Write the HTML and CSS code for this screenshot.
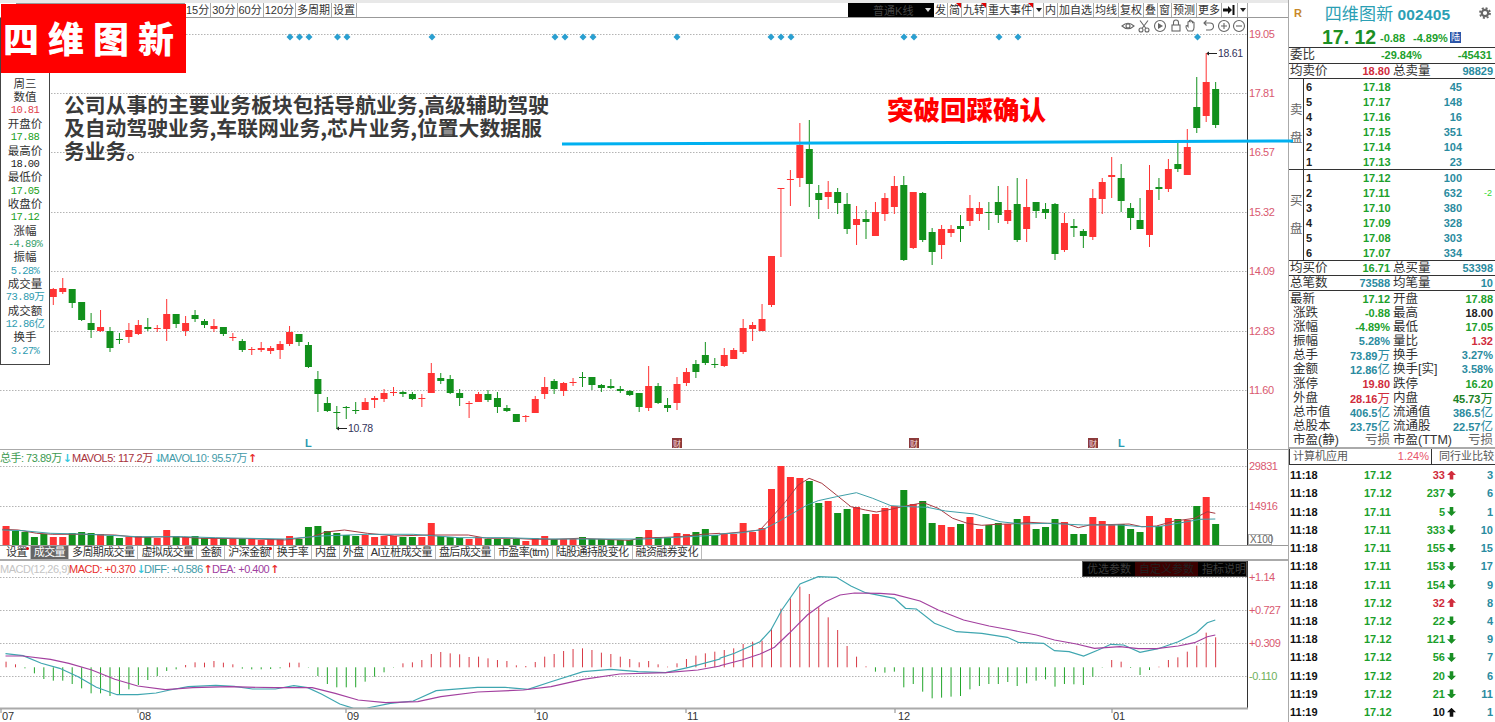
FILE: index.html
```html
<!DOCTYPE html>
<html lang="zh-CN">
<head>
<meta charset="UTF-8">
<title>四维图新 002405</title>
<link rel="stylesheet" href="styles.css">
</head>
<body>
<div class="screen">

  <div class="main">
    <!-- top toolbar -->
    <div class="toolbar">
      <div class="tb-hidden"></div>
      <div class="tb-group">
        <span class="tb-btn">15分</span><span class="tb-btn">30分</span><span class="tb-btn">60分</span><span class="tb-btn">120分</span><span class="tb-btn">多周期</span><span class="tb-btn">设置</span>
      </div>
      <div class="tb-select"><span>普通K线</span><i class="caret white"></i></div>
      <div class="tb-group">
        <span class="tb-btn">发</span><span class="tb-btn flag">简</span><span class="tb-btn flag">九转</span><span class="tb-btn flag">重大事件</span><span class="tb-btn small"><i class="caret"></i></span><span class="tb-btn">内</span><span class="tb-btn">加自选</span><span class="tb-btn">均线</span><span class="tb-btn">复权</span><span class="tb-btn">叠</span><span class="tb-btn">窗</span><span class="tb-btn">预测</span><span class="tb-btn">更多</span>
        <span class="tb-btn">
          <svg width="13" height="10" viewBox="0 0 13 10"><path d="M0 3.5h5V1l4 4-4 4V6.500H0z" fill="#111"/><path d="M10.500 0v10" stroke="#111" stroke-width="2"/></svg>
        </span>
        <span class="tb-btn small"><i class="caret"></i></span>
      </div>
    </div>

    <!-- price chart -->
    <div class="panel price-panel">
      <svg id="priceChart" class="chart" width="1288" height="431" viewBox="0 18 1288 431">
        <g class="grid">
          <path d="M0 34.500H1247M0 93.500H1247M0 152.500H1247M0 212.500H1247M0 271.500H1247M0 331.500H1247M0 390.500H1247"/>
        </g>
        <path class="axis" d="M1247.500 18V449"/>
        <g class="tick-red">
          <text x="1249" y="38">19.05</text>
          <text x="1249" y="97">17.81</text>
          <text x="1249" y="156">16.57</text>
          <text x="1249" y="216">15.32</text>
          <text x="1249" y="275">14.09</text>
          <text x="1249" y="335">12.83</text>
          <text x="1249" y="394">11.60</text>
        </g>

        <!-- chart tools -->
        <g class="tool">
          <path d="M1122 26q6-5.500 12 0q-6 5.500-12 0z"/><circle cx="1128" cy="26" r="2"/>
          <circle cx="1141" cy="30" r="2"/><circle cx="1147" cy="30" r="2"/><path d="M1142 28.500l6-8M1146 28.500l-6-8"/>
          <circle cx="1160" cy="26" r="5.500"/><path class="tool-fill" d="M1158 23l5 3-5 3z"/>
          <rect x="1172" y="25" width="8" height="6"/><path d="M1173.500 25v-2.500a2.500 2.500 0 0 1 5 0V25"/>
          <path d="M1188 31q-2.500-3-2-5 1-1 2 .5v-4.500q1-1 1.500 0v-1.500q1-1 1.500 0v1q1-1 1.500 0v1q1-1 1.500 0v5q0 2.500-1.500 3.500z"/>
          <path d="M1204 23h6a3.500 3.500 0 0 1 0 7h-4M1206.500 20.500l-2.500 2.500 2.500 2.500"/>
          <circle cx="1224" cy="26" r="5.500"/><path d="M1221 26h6M1224 23v6"/>
          <circle cx="1239" cy="26" r="5.500"/><path d="M1236 26h6"/>
        </g>

        <!-- highest / lowest price marks -->
        <g class="mark">
          <path d="M1207 53.500h10"/><path class="mark-head" d="M1206 53.500l3-2v4z"/>
          <text x="1218" y="57">18.61</text>
          <path d="M337 428.500h10"/><path class="mark-head" d="M336 428.500l3-2v4z"/>
          <text x="348" y="432">10.78</text>
        </g>

        <!-- event marks along the bottom -->
        <text class="ev-l" x="305" y="447">L</text>
        <text class="ev-l" x="1118" y="447">L</text>
        <rect class="ev-box" x="672" y="438" width="10" height="10"/><text class="ev-txt" x="673" y="446.500">财</text>
        <rect class="ev-box" x="909" y="438" width="10" height="10"/><text class="ev-txt" x="910" y="446.500">财</text>
        <rect class="ev-box" x="1088" y="438" width="10" height="10"/><text class="ev-txt" x="1089" y="446.500">财</text>

        <g id="candles"></g>
        <g id="dots"></g>
        <path class="trend" d="M562 144L1293 141"/>
      </svg>

      <div class="tip">
        <div>周三</div><div>数值</div><div class="num red">10.81</div>
        <div>开盘价</div><div class="num green">17.88</div>
        <div>最高价</div><div class="num black">18.00</div>
        <div>最低价</div><div class="num green">17.05</div>
        <div>收盘价</div><div class="num green">17.12</div>
        <div>涨幅</div><div class="num seagreen">-4.89%</div>
        <div>振幅</div><div class="num teal">5.28%</div>
        <div>成交量</div><div class="num teal">73.89万</div>
        <div>成交额</div><div class="num teal">12.86亿</div>
        <div>换手</div><div class="num teal">3.27%</div>
      </div>

      <div class="logo">四维图新</div>
      <div class="note">公司从事的主要业务板块包括导航业务,高级辅助驾驶<br>及自动驾驶业务,车联网业务,芯片业务,位置大数据服<br>务业务。</div>
      <div class="breakout">突破回踩确认</div>
    </div>

    <!-- volume -->
    <div class="panel vol-panel">
      <svg id="volChart" class="chart" width="1288" height="95" viewBox="0 450 1288 95">
        <g class="grid"><path d="M0 466.500H1247M0 506.500H1247"/></g>
        <path class="axis" d="M1247.500 450V545"/>
        <g class="tick-red">
          <text x="1249" y="470">29831</text>
          <text x="1249" y="510">14916</text>
        </g>
        <g id="volBars"></g>
        <text class="legend" y="462">
          <tspan class="l-green" x="0">总手: 73.89万</tspan><tspan class="l-cyan arrow" dx="1">↓</tspan>
          <tspan class="l-maroon" x="72">MAVOL5: 117.2万</tspan><tspan class="l-cyan arrow" dx="1">↓</tspan>
          <tspan class="l-teal" x="160">MAVOL10: 95.57万</tspan><tspan class="l-red arrow" dx="1">↑</tspan>
        </text>
        <rect class="x100" x="1248.500" y="534.500" width="23" height="10"/>
        <text class="x100-txt" x="1250" y="543">X100</text>
      </svg>
    </div>

    <!-- indicator tabs -->
    <div class="tabs">
      <span class="tab star">设置</span><span class="tab on">成交量</span><span class="tab">多周期成交量</span><span class="tab">虚拟成交量</span><span class="tab">金额</span><span class="tab star">沪深金额</span><span class="tab">换手率</span><span class="tab">内盘</span><span class="tab">外盘</span><span class="tab">AI立桩成交量</span><span class="tab">盘后成交量</span><span class="tab">市盈率(ttm)</span><span class="tab">陆股通持股变化</span><span class="tab">融资融券变化</span>
    </div>

    <!-- macd -->
    <div class="panel macd-panel">
      <svg id="macdChart" class="chart" width="1288" height="147" viewBox="0 561 1288 147">
        <g class="grid"><path d="M0 577.500H1247M0 610.500H1247M0 643.500H1247M0 676.500H1247"/></g>
        <path class="axis" d="M1247.500 561V708"/>
        <g class="tick-red">
          <text x="1249" y="581">+1.14</text>
          <text x="1249" y="614">+0.727</text>
          <text x="1249" y="647">+0.309</text>
          <text class="tick-green" x="1249" y="680">-0.110</text>
        </g>
        <g id="macdBars"></g>
        <text class="legend" y="573">
          <tspan class="l-gray" x="0">MACD(12,26,9)</tspan>
          <tspan class="l-red" x="69">MACD: +0.370</tspan><tspan class="l-cyan arrow" dx="1">↓</tspan>
          <tspan class="l-teal" x="144">DIFF: +0.586</tspan><tspan class="l-red arrow" dx="1">↑</tspan>
          <tspan class="l-purple" x="212">DEA: +0.400</tspan><tspan class="l-red arrow" dx="1">↑</tspan>
        </text>
      </svg>
      <div class="params">
        <span class="param">优选参数</span><span class="param cur">自定义参数</span><span class="param">指标说明</span>
      </div>
    </div>

    <!-- date axis -->
    <div class="dates">
      <svg class="chart" width="1288" height="13" viewBox="0 709 1288 13">
        <path class="date-line" d="M0 708.500H1248"/>
        <path class="date-tick" d="M1 709v4M138 709v4M346 709v4M535 709v4M686 709v4M895 709v4M1112 709v4"/>
        <text class="date" x="2" y="720">07</text>
        <text class="date" x="139" y="720">08</text>
        <text class="date" x="347" y="720">09</text>
        <text class="date" x="536" y="720">10</text>
        <text class="date" x="687" y="720">11</text>
        <text class="date" x="898" y="720">12</text>
        <text class="date" x="1113" y="720">01</text>
      </svg>
    </div>
  </div>

  <!-- quote column -->
  <aside class="side">
    <div class="head">
      <div class="head-name">
        <span class="r-mark">R</span>
        <span class="stock">四维图新 <b>002405</b></span>
        <svg class="gear" width="12" height="12" viewBox="0 0 12 12"><circle cx="6" cy="6" r="3.200" fill="none" stroke="#666" stroke-width="2.200"/><circle cx="6" cy="6" r="5" fill="none" stroke="#666" stroke-width="1.800" stroke-dasharray="2 1.930"/></svg>
      </div>
      <div class="head-price">
        <span class="big">17. 12</span>
        <span class="chg">-0.88</span>
        <span class="chg pct">-4.89%</span>
        <span class="lu">陆</span>
      </div>
    </div>

    <div class="line wei"><span>委比</span><span class="v green center">-29.84%</span><span class="v green">-45431</span></div>
    <div class="line">
      <div class="half"><span>均卖价</span><span class="v red">18.80</span></div>
      <div class="half"><span>总卖量</span><span class="v teal">98829</span></div>
    </div>

    <div class="book">
      <div class="book-side"><span>卖</span><span>盘</span></div>
      <div class="book-rows">
        <div class="book-row"><b>6</b><span class="v green">17.18</span><span class="v teal">45</span></div>
        <div class="book-row"><b>5</b><span class="v green">17.17</span><span class="v teal">148</span></div>
        <div class="book-row"><b>4</b><span class="v green">17.16</span><span class="v teal">16</span></div>
        <div class="book-row"><b>3</b><span class="v green">17.15</span><span class="v teal">351</span></div>
        <div class="book-row"><b>2</b><span class="v green">17.14</span><span class="v teal">104</span></div>
        <div class="book-row"><b>1</b><span class="v green">17.13</span><span class="v teal">23</span></div>
      </div>
    </div>
    <div class="book">
      <div class="book-side"><span>买</span><span>盘</span></div>
      <div class="book-rows">
        <div class="book-row"><b>1</b><span class="v green">17.12</span><span class="v teal">100</span></div>
        <div class="book-row"><b>2</b><span class="v green">17.11</span><span class="v teal">632</span><span class="tiny">-2</span></div>
        <div class="book-row"><b>3</b><span class="v green">17.10</span><span class="v teal">380</span></div>
        <div class="book-row"><b>4</b><span class="v green">17.09</span><span class="v teal">328</span></div>
        <div class="book-row"><b>5</b><span class="v green">17.08</span><span class="v teal">303</span></div>
        <div class="book-row"><b>6</b><span class="v green">17.07</span><span class="v teal">334</span></div>
      </div>
    </div>

    <div class="line">
      <div class="half"><span>均买价</span><span class="v green">16.71</span></div>
      <div class="half"><span>总买量</span><span class="v teal">53398</span></div>
    </div>
    <div class="line">
      <div class="half"><span>总笔数</span><span class="v teal">73588</span></div>
      <div class="half"><span>均笔量</span><span class="v teal">10</span></div>
    </div>

    <div class="stats">
      <div class="half"><span>最新</span><span class="v green">17.12</span></div><div class="half"><span>开盘</span><span class="v green">17.88</span></div>
      <div class="half"><span>涨跌</span><span class="v green">-0.88</span></div><div class="half"><span>最高</span><span class="v black">18.00</span></div>
      <div class="half"><span>涨幅</span><span class="v green">-4.89%</span></div><div class="half"><span>最低</span><span class="v green">17.05</span></div>
      <div class="half"><span>振幅</span><span class="v teal">5.28%</span></div><div class="half"><span>量比</span><span class="v red">1.32</span></div>
      <div class="half"><span>总手</span><span class="v teal">73.89<em>万</em></span></div><div class="half"><span>换手</span><span class="v teal">3.27%</span></div>
      <div class="half"><span>金额</span><span class="v teal">12.86<em>亿</em></span></div><div class="half"><span>换手[实]</span><span class="v teal">3.58%</span></div>
      <div class="half"><span>涨停</span><span class="v red">19.80</span></div><div class="half"><span>跌停</span><span class="v green">16.20</span></div>
      <div class="half"><span>外盘</span><span class="v red">28.16<em>万</em></span></div><div class="half"><span>内盘</span><span class="v darkgreen">45.73<em>万</em></span></div>
      <div class="half"><span>总市值</span><span class="v teal">406.5<em>亿</em></span></div><div class="half"><span>流通值</span><span class="v teal">386.5<em>亿</em></span></div>
      <div class="half"><span>总股本</span><span class="v teal">23.75<em>亿</em></span></div><div class="half"><span>流通股</span><span class="v teal">22.57<em>亿</em></span></div>
      <div class="half"><span>市盈(静)</span><span class="loss">亏损</span></div><div class="half"><span>市盈(TTM)</span><span class="loss">亏损</span></div>
    </div>

    <div class="sector">
      <div class="sector-l"><span>计算机应用</span><span class="sector-pct">1.24%</span></div>
      <div class="sector-r">同行业比较</div>
    </div>

    <div class="ticks">
      <div class="tick"><b>11:18</b><span class="p">17.12</span><span class="q red">33</span><i class="arr up red-bg"></i><span class="n">3</span></div>
      <div class="tick"><b>11:18</b><span class="p">17.12</span><span class="q">237</span><i class="arr dn"></i><span class="n">6</span></div>
      <div class="tick"><b>11:18</b><span class="p">17.11</span><span class="q">5</span><i class="arr dn"></i><span class="n">1</span></div>
      <div class="tick"><b>11:18</b><span class="p">17.11</span><span class="q">333</span><i class="arr dn"></i><span class="n">10</span></div>
      <div class="tick"><b>11:18</b><span class="p">17.11</span><span class="q">155</span><i class="arr dn"></i><span class="n">15</span></div>
      <div class="tick"><b>11:18</b><span class="p">17.11</span><span class="q">153</span><i class="arr dn"></i><span class="n">17</span></div>
      <div class="tick"><b>11:18</b><span class="p">17.11</span><span class="q">154</span><i class="arr dn"></i><span class="n">9</span></div>
      <div class="tick"><b>11:18</b><span class="p">17.12</span><span class="q red">32</span><i class="arr up red-bg"></i><span class="n">8</span></div>
      <div class="tick"><b>11:18</b><span class="p">17.12</span><span class="q">22</span><i class="arr dn"></i><span class="n">4</span></div>
      <div class="tick"><b>11:18</b><span class="p">17.12</span><span class="q">121</span><i class="arr dn"></i><span class="n">9</span></div>
      <div class="tick"><b>11:18</b><span class="p">17.12</span><span class="q">56</span><i class="arr dn"></i><span class="n">7</span></div>
      <div class="tick"><b>11:19</b><span class="p">17.12</span><span class="q">20</span><i class="arr dn"></i><span class="n">6</span></div>
      <div class="tick"><b>11:19</b><span class="p">17.12</span><span class="q">21</span><i class="arr dn"></i><span class="n">11</span></div>
      <div class="tick"><b>11:19</b><span class="p">17.12</span><span class="q black">10</span><i class="arr up black-bg"></i><span class="n">1</span></div>
    </div>
  </aside>
</div>
<script src="chart.js"></script>
</body>
</html>
```

FILE: styles.css
```css
* {
	box-sizing: border-box;
}
html, body {
	margin: 0;
	padding: 0;
	background: #fff;
	overflow: hidden;
}
body {
	font-family: "Liberation Sans", "Noto Sans CJK SC", sans-serif;
	font-size: 11px;
	color: #222;
}
.screen {
	display: flex;
	width: 1495px;
	height: 722px;
}
.main {
	width: 1288px;
	flex: none;
}

/* toolbar */
.toolbar {
	display: flex;
	height: 18px;
	border-top: 3px solid #e8e8e8;
	border-bottom: 1px solid #999;
}
.tb-hidden {
	width: 169px;
	margin-left: 16px;
	border-top: 1px solid #999;
}
.tb-group {
	display: flex;
}
.tb-btn {
	position: relative;
	display: flex;
	align-items: center;
	justify-content: center;
	padding: 0 1px;
	border-right: 1px solid #aaa;
	font-size: 11px;
	line-height: 14px;
	color: #333;
	white-space: nowrap;
}
.tb-btn.small {
	width: 10px;
}
.tb-btn.flag::after {
	content: "";
	position: absolute;
	top: 0;
	right: 0;
	border-top: 5px solid #e00000;
	border-left: 5px solid transparent;
}
.tb-select {
	display: flex;
	align-items: center;
	justify-content: space-between;
	width: 86px;
	margin-left: 491px;
	padding: 0 3px 0 25px;
	background: #000;
	color: #444;
	font-size: 11px;
}
.caret {
	display: block;
	border-top: 4px solid #222;
	border-left: 3.500px solid transparent;
	border-right: 3.500px solid transparent;
}
.caret.white {
	border-top-color: #ddd;
}

/* chart panels */
.panel {
	position: relative;
}
.chart {
	display: block;
	position: relative;
	z-index: 1;
	overflow: visible;
}
.price-panel {
	height: 432px;
	border-bottom: 1px solid #aaa;
}
.vol-panel {
	height: 96px;
	border-bottom: 1px solid #999;
}
.macd-panel {
	height: 147px;
}
.grid path {
	fill: none;
	stroke: #b4b4b4;
	stroke-width: 1;
	stroke-dasharray: 1.500 1.500;
}
.axis {
	stroke: #333;
	stroke-width: 1;
	fill: none;
}
.tick-red text {
	font-size: 11px;
	fill: #d9596f;
	letter-spacing: -0.4px;
}
.tick-red .tick-green {
	fill: #6fb05a;
}
.tool path, .tool circle, .tool rect {
	fill: none;
	stroke: #666;
	stroke-width: 1.100;
}
.tool .tool-fill {
	fill: #666;
	stroke: none;
}
.mark path {
	stroke: #222;
	stroke-width: 1;
	fill: none;
}
.mark .mark-head {
	fill: #222;
	stroke: none;
}
.mark text {
	font-size: 10.500px;
	letter-spacing: -0.300px;
	fill: #33335a;
}
.ev-l {
	font-size: 11px;
	font-weight: bold;
	fill: #2a9ab0;
}
.ev-box {
	fill: #8c3a3a;
}
.ev-txt {
	font-size: 8px;
	fill: #f3dede;
}
.trend {
	stroke: #00b0f0;
	stroke-width: 3;
	fill: none;
}
.legend {
	font-size: 11px;
	letter-spacing: -0.500px;
}
.arrow {
	font-family: "DejaVu Sans", sans-serif;
	font-weight: bold;
	font-size: 11px;
	letter-spacing: -2px;
}
.l-green { fill: #3c9a50; }
.l-cyan { fill: #35c8e0; }
.l-maroon { fill: #a8323c; }
.l-teal { fill: #3f9aa8; }
.l-red { fill: #e8302e; }
.l-gray { fill: #c4c4c4; }
.l-purple { fill: #a040a0; }
.x100 {
	fill: #fff;
	stroke: #aaa;
}
.x100-txt {
	font-size: 10px;
	fill: #666;
}

/* floating data panel on the chart */
.tip {
	position: absolute;
	top: 0;
	left: 0;
	z-index: 2;
	display: flex;
	flex-direction: column;
	justify-content: flex-end;
	width: 50px;
	height: 347px;
	padding-bottom: 6px;
	background: #fff;
	border-left: 1px solid #444;
	border-right: 1px solid #444;
	border-bottom: 1px solid #444;
	text-align: center;
	font-size: 11.500px;
}
.tip div {
	height: 13.350px;
	line-height: 13.350px;
	color: #333;
	white-space: nowrap;
}
.tip .num {
	font-family: "Liberation Mono", "Noto Sans CJK SC", monospace;
	font-size: 10.500px;
	letter-spacing: -0.600px;
	overflow: hidden;
}
.tip .red { color: #e0404a; }
.tip .green { color: #20a020; }
.tip .black { color: #222; }
.tip .seagreen { color: #35a06a; }
.tip .teal { color: #2f9cb0; }

.logo {
	position: absolute;
	top: -14px;
	left: 1px;
	z-index: 3;
	width: 185px;
	height: 69px;
	padding-left: 2px;
	background: #f00;
	color: #fff;
	font-family: "Noto Sans CJK SC", sans-serif;
	font-size: 36px;
	font-weight: 900;
	line-height: 67px;
	letter-spacing: 9px;
	white-space: nowrap;
}
.note {
	position: absolute;
	top: 75px;
	left: 64px;
	z-index: 2;
	width: 500px;
	font-family: "Noto Sans CJK SC", sans-serif;
	font-size: 20.800px;
	font-weight: 700;
	line-height: 23px;
	color: #3a3a3a;
	white-space: nowrap;
}
.breakout {
	position: absolute;
	top: 74px;
	left: 887px;
	z-index: 2;
	font-family: "Noto Sans CJK SC", sans-serif;
	font-size: 26.500px;
	font-weight: 900;
	line-height: 34px;
	color: #f00;
	white-space: nowrap;
}

/* indicator tabs */
.tabs {
	display: flex;
	height: 15px;
	padding-left: 3px;
	border-bottom: 2px solid #aaa;
}
.tab {
	position: relative;
	padding: 0 3px;
	border-right: 1px solid #bbb;
	font-size: 11px;
	line-height: 13px;
	letter-spacing: -0.600px;
	color: #333;
	white-space: nowrap;
}
.tab.on {
	background: #666;
	color: #fff;
}
.tab.star::after {
	content: "";
	position: absolute;
	top: 1px;
	right: 1px;
	width: 3px;
	height: 3px;
	border-radius: 50%;
	background: #e00000;
}
.params {
	position: absolute;
	top: 0;
	left: 1082px;
	z-index: 2;
	display: flex;
	width: 165px;
	height: 16px;
	background: #000;
	border: 1px solid #555;
	font-size: 11px;
	line-height: 14px;
	text-align: center;
	color: #3c3c3c;
}
.param {
	flex: 1 1 auto;
	white-space: nowrap;
	padding: 0 4px;
}
.param.cur {
	background: #3c0000;
	color: #222;
}

.dates {
	height: 14px;
	padding-top: 1px;
}
.date-line {
	stroke: #aaa;
	stroke-width: 2;
	fill: none;
}
.date-tick {
	stroke: #888;
	fill: none;
}
.date {
	font-size: 11px;
	fill: #333;
}

/* right column */
.side {
	width: 207px;
	flex: none;
	border-left: 1px solid #aaa;
	font-size: 12.500px;
	background: #fff;
}
.head {
	height: 48px;
	border-bottom: 1px solid #333;
}
.head-name {
	position: relative;
	height: 28px;
	padding-right: 9px;
	text-align: center;
	line-height: 26px;
}
.r-mark {
	position: absolute;
	left: 5px;
	top: 0;
	font-size: 11px;
	font-weight: bold;
	color: #c8882a;
}
.stock {
	font-family: "Noto Sans CJK SC", sans-serif;
	font-size: 17px;
	letter-spacing: 0.200px;
	color: #2b9fb4;
}
.stock b {
	font-family: "Liberation Sans", sans-serif;
	font-size: 15.500px;
}
.gear {
	position: absolute;
	right: 4px;
	top: 7px;
}
.head-price {
	display: flex;
	align-items: center;
	height: 19px;
	padding-left: 33px;
}
.big {
	width: 58px;
	font-size: 19.500px;
	font-weight: bold;
	color: #1c8f24;
	white-space: pre;
}
.chg {
	width: 33px;
	font-size: 11px;
	font-weight: bold;
	color: #1c9f2c;
}
.chg.pct {
	width: 37px;
}
.lu {
	width: 11px;
	height: 11px;
	background: #2b55a8;
	color: #fff;
	font-size: 9px;
	line-height: 11px;
	text-align: center;
}
.v {
	font-size: 11px;
	font-weight: bold;
	white-space: nowrap;
}
.v em {
	font-family: "Noto Sans CJK SC", sans-serif;
	font-size: 12.500px;
	font-weight: normal;
	font-style: normal;
}
.green { color: #1c9f2c; }
.red { color: #d02c3c; }
.teal { color: #2a8ba0; }
.black { color: #222; }
.darkgreen { color: #1a7f24; }

.line {
	display: flex;
	height: 15px;
	padding-left: 1px;
	border-bottom: 1px solid #333;
	line-height: 14px;
	color: #333;
}
.wei {
	justify-content: space-between;
	padding-right: 3px;
	height: 16px;
}
.wei .center {
	margin-left: 30px;
}
.half {
	display: flex;
	justify-content: space-between;
	width: 100px;
	white-space: nowrap;
}
.half + .half {
	width: 103px;
	margin-left: 0;
	padding-left: 3px;
}
.book {
	display: flex;
	height: 91px;
	border-bottom: 1px solid #333;
}
.book-side {
	display: flex;
	flex-direction: column;
	justify-content: center;
	gap: 12px;
	width: 15px;
	padding-left: 1px;
	border-right: 1px solid #333;
	color: #666;
	font-size: 12.500px;
	line-height: 16px;
}
.book-rows {
	flex: 1;
	padding-top: 1px;
}
.book-row {
	display: grid;
	grid-template-columns: 57px 30px 69px 1fr;
	height: 15px;
	padding-left: 2px;
	line-height: 15px;
}
.book-row b {
	font-size: 11px;
	color: #222;
}
.book-row .teal {
	text-align: right;
}
.tiny {
	font-size: 9px;
	color: #2fd82f;
	text-align: right;
	padding-right: 3px;
}
.stats {
	display: grid;
	grid-template-columns: 100px 103px;
	grid-auto-rows: 14.100px;
	padding: 1px 0 0 1px;
	height: 158px;
	line-height: 14.100px;
	color: #333;
	border-bottom: 2px solid #aaa;
}
.stats .half {
	width: auto;
}
.loss {
	color: #666;
}
.sector {
	display: flex;
	height: 16px;
	border-left: 1px solid #333;
	border-bottom: 1px solid #333;
	font-size: 11px;
	line-height: 15px;
	color: #555;
}
.sector-l {
	display: flex;
	justify-content: space-between;
	width: 142px;
	padding: 0 2px 0 3px;
	border-right: 1px solid #333;
}
.sector-pct {
	color: #e8556a;
}
.sector-r {
	flex: 1;
	padding-left: 7px;
	white-space: nowrap;
}
.ticks {
	padding-top: 1px;
}
.tick {
	display: grid;
	grid-template-columns: 74px 30px 51px 12px 36px;
	align-items: center;
	height: 18.240px;
	font-size: 11px;
	padding-left: 1px;
	line-height: 18px;
}
.tick b {
	color: #111;
}
.tick .p {
	color: #1c9f2c;
	font-weight: bold;
}
.tick .q {
	text-align: right;
	color: #1c9f2c;
	font-weight: bold;
}
.tick .q.red { color: #d02c3c; }
.tick .q.black { color: #111; }
.tick .n {
	text-align: right;
	color: #2a8ba0;
	font-weight: bold;
}
.arr {
	display: block;
	width: 9px;
	height: 9px;
	margin-left: 2px;
	background: #1a8f24;
}
.arr.up {
	clip-path: polygon(50% 0, 100% 50%, 70% 50%, 70% 100%, 30% 100%, 30% 50%, 0 50%);
}
.arr.dn {
	clip-path: polygon(30% 0, 70% 0, 70% 50%, 100% 50%, 50% 100%, 0 50%, 30% 50%);
}
.red-bg { background: #d02c3c; }
.black-bg { background: #111; }
```

FILE: chart.js
```js
// kline data, read off the picture as pixel rows: colour, wick top, body top, body bottom, wick bottom
var candles = [
	['r',288,289,297,305],['r',278,288,292,294],['g',289,289,303,308],['g',302,302,320,321],['g',313,323,330,338],
	['r',310,327,331,332],['g',327,331,348,352],['g',333,339,339,344],['r',323,330,337,343],['r',320,325,334,335],
	['g',318,327,329,331],['r',325,328,329,332],['r',299,314,329,341],['g',314,314,324,328],['r',316,323,331,336],
	['g',310,315,319,322],['g',319,321,325,328],['r',319,326,329,332],['g',327,327,334,336],['r',333,337,338,341],
	['g',339,341,350,352],['r',347,349,350,355],['r',342,348,350,352],['r',346,348,351,354],['r',341,344,350,359],
	['r',326,332,344,346],['g',334,334,342,346],['g',342,345,367,368],['g',371,379,394,412],['g',397,403,411,412],
	['g',406,412,412,429],['g',406,407,408,419],['g',402,410,410,414],['r',398,402,410,410],['r',396,398,400,408],
	['r',389,393,399,402],['r',387,392,393,396],['g',391,392,394,397],['g',392,394,399,400],['r',394,398,399,407],
	['r',363,373,393,393],['g',373,378,381,384],['g',375,379,393,394],['g',389,393,398,406],['r',401,403,404,418],
	['r',392,394,402,402],['g',390,394,400,402],['g',392,398,407,413],['g',405,408,411,412],['g',414,414,422,422],
	['r',415,416,416,422],['r',396,399,413,413],['r',377,387,394,399],['g',379,381,389,394],['r',382,383,391,396],
	['r',378,382,383,386],['g',372,377,377,387],['g',377,377,385,390],['g',384,385,388,392],['g',379,386,388,389],
	['g',386,389,391,393],['g',390,391,395,396],['g',393,393,407,412],['r',366,386,408,411],['g',383,386,403,404],
	['g',398,405,408,412],['r',377,384,403,410],['r',368,372,383,386],['g',360,364,372,378],['g',342,355,363,365],
	['g',358,364,364,368],['r',348,355,366,367],['r',348,350,359,359],['r',319,328,352,354],['r',322,325,329,341],
	['r',304,319,331,331],['r',256,256,305,307],['r',188,188,188,257],['r',170,179,179,206],['r',123,145,178,187],
	['g',120,149,184,207],['g',185,193,200,219],['r',181,192,197,209],['g',188,192,203,214],['g',193,204,229,234],
	['r',206,219,225,245],['g',210,219,222,239],['r',202,212,236,236],['r',193,198,214,221],['r',176,186,207,214],
	['g',176,185,260,261],['r',192,192,248,249],['g',192,193,240,242],['g',228,232,252,265],['r',225,229,245,259],
	['r',225,229,233,237],['g',215,226,229,242],['r',195,208,221,226],['r',202,208,214,221],['g',202,212,213,230],
	['g',186,202,215,223],['r',186,210,221,224],['g',178,204,240,242],['r',179,207,229,242],['g',202,202,211,218],
	['g',203,209,213,219],['g',203,204,254,260],['r',213,223,250,252],['g',219,226,228,237],['g',229,231,236,248],
	['r',189,198,237,240],['r',178,182,199,214],['r',157,175,177,198],['g',164,178,201,212],['g',203,208,218,230],
	['g',198,220,229,229],['r',165,190,235,247],['g',178,187,189,200],['r',159,169,189,192],['g',143,164,169,172],
	['r',129,147,175,175],['g',77,107,128,133],['r',53,82,116,122],['g',82,89,125,128]
];

// volume bar tops from index -5, negative means a green bar
var vols = [
	526,-531,-532,-537,-534,537,537,-533,-532,-533,534,-536,-538,537,536,-537,538,530,-536,537,-536,-538,538,-538,538,
	-539,539,540,539,539,536,-539,-527,-526,-531,-533,-535,-536,535,537,536,536,-537,-537,537,523,-536,-537,-538,539,
	537,-539,-539,-539,-539,541,538,536,-539,539,539,-537,-539,-539,-540,-540,-540,-537,530,-537,-537,533,534,-532,
	-529,-535,534,534,523,532,528,489,466,477,478,-481,-503,501,-513,-509,507,-514,514,508,506,-490,504,-501,-523,525,
	527,-524,517,529,-525,-523,524,-519,516,-529,-527,-519,522,-534,-534,517,521,525,-524,-529,-532,516,-526,518,-519,
	520,-506,497,-524
];

// macd bar ends from index -5, as 3x crop rows (zero line is row 322)
var hist = [
	305,313,325,340,357,362,362,372,385,400,400,408,403,388,375,360,348,333,328,315,307,308,303,308,313,326,328,328,327,
	325,308,308,323,348,372,382,382,382,365,350,337,323,310,307,300,282,276,280,283,291,290,295,300,303,316,318,306,290,
	282,273,267,265,270,278,282,290,297,307,303,313,320,310,297,287,280,275,270,265,252,245,242,205,146,115,80,102,142,
	172,210,258,290,319,335,338,335,382,372,395,415,413,410,408,388,378,372,372,366,378,370,362,358,380,372,373,375,350,
	323,300,305,324,345,330,320,300,292,275,257,218,232
];

var NS = 'http://www.w3.org/2000/svg';
var dots = [290,299.500,309,337.500,347,432,555,565,583,593,677,771,781,791,904,914,999,1018,1197.500];

function px(i) {
	return 53.300 + 9.450 * i;
}

function add(parent, tag, attrs) {
	var el = document.createElementNS(NS, tag);
	for (var k in attrs) el.setAttribute(k, attrs[k]);
	parent.appendChild(el);
	return el;
}

function drawCandles() {
	var g = document.getElementById('candles');
	candles.forEach(function (c, i) {
		var x = px(i);
		var col = c[0] === 'r' ? '#ff3333' : '#12901c';
		add(g, 'line', { x1: x, x2: x, y1: c[1], y2: c[4], stroke: col, 'stroke-width': 1 });
		var h = Math.max(c[3] - c[2], 1);
		add(g, 'rect', { x: x - 3.500, y: c[2], width: 7, height: h, fill: col });
	});
}

function drawDots() {
	var g = document.getElementById('dots');
	dots.forEach(function (x) {
		add(g, 'path', { d: 'M' + (x - 3.500) + ' 37L' + x + ' 33.500L' + (x + 3.500) + ' 37L' + x + ' 40.500Z', fill: '#2a9fd0' });
	});
}

// lines were traced in two crops, so each part carries its own x scale and offset
function pts(list, kx, x0, y0) {
	var out = [];
	for (var i = 0; i < list.length; i += 2) {
		out.push((x0 + list[i] / kx).toFixed(1) + ',' + (y0 + list[i + 1] / 3).toFixed(1));
	}
	return out;
}

function drawLine(g, left, right, y0, col, w) {
	var p = pts(left, 2.178, 0, y0).concat(pts(right, 2.750, 720, y0));
	add(g, 'polyline', { points: p.join(' '), fill: 'none', stroke: col, 'stroke-width': w });
}

function drawVolume() {
	var g = document.getElementById('volBars');
	vols.forEach(function (v, n) {
		var top = Math.abs(v);
		add(g, 'rect', { x: px(n - 5) - 3.500, y: top, width: 7, height: 545 - top, fill: v > 0 ? '#ff3333' : '#12901c' });
	});
	drawLine(g,
		[5,268,40,270,80,280,115,283,180,283,250,285,300,292,380,290,440,295,540,296,620,300,680,290,710,276,750,270,800,280,860,288,930,285,1020,285,1060,295,1120,295,1160,298,1210,298,1260,295,1370,301,1400,294,1450,292,1480,290,1530,283,1568,280],
		[0,282,50,277,110,270,140,235,180,185,215,135,245,115,280,130,320,165,360,200,400,210,430,216,470,208,510,198,560,188,600,205,640,235,680,250,720,256,760,253,800,252,850,247,900,250,950,250,985,263,1020,254,1060,254,1125,252,1160,260,1200,258,1250,243,1305,235,1340,215,1362,220],
		440, '#a83a42', 1);
	drawLine(g,
		[5,270,50,272,110,280,180,282,300,290,400,290,470,293,620,297,700,288,800,283,900,283,1000,293,1100,293,1200,297,1300,297,1400,297,1500,290,1568,285],
		[0,282,60,278,120,268,160,245,200,220,240,195,270,182,320,170,375,158,420,175,470,197,520,200,570,202,620,213,700,222,770,245,830,252,900,250,1000,255,1100,255,1160,260,1205,260,1260,250,1320,238,1362,237],
		440, '#3f9fa8', 1);
}

function drawMacd() {
	var g = document.getElementById('macdBars');
	hist.forEach(function (z, n) {
		var x = px(n - 5);
		add(g, 'line', { x1: x, x2: x, y1: 667.300, y2: 560 + z / 3, stroke: z < 322 ? '#d83a46' : '#22a52a', 'stroke-width': 1 });
	});
	drawLine(g,
		[12,281,50,287,90,310,130,325,170,350,210,382,255,404,300,404,340,399,370,390,410,380,470,376,510,379,550,387,600,387,640,377,670,383,700,402,740,432,770,445,800,444,850,430,900,423,950,392,1040,382,1100,382,1150,388,1200,365,1270,335,1330,328,1390,335,1450,338,1500,322,1568,297],
		[0,295,40,280,110,245,140,210,170,150,220,72,270,50,320,52,360,78,400,98,480,115,510,145,540,147,590,190,650,215,720,220,790,232,820,247,890,250,920,272,960,275,1000,288,1040,270,1075,253,1110,255,1155,277,1205,266,1260,245,1310,218,1340,188,1362,180],
		560, '#3fa6b0', 1.200);
	drawLine(g,
		[12,288,50,288,110,298,150,310,200,330,250,358,300,378,360,389,420,383,500,380,600,383,680,383,730,400,780,420,840,428,910,425,960,410,1040,396,1140,390,1200,380,1270,358,1350,342,1450,338,1520,330,1568,318],
		[0,317,60,300,110,282,150,262,190,220,240,165,290,125,330,105,370,99,440,100,480,103,550,123,600,150,670,180,740,198,800,210,870,225,920,240,980,252,1030,265,1100,260,1150,266,1200,266,1260,258,1305,248,1340,230,1362,225],
		560, '#a3409f', 1.200);
}

drawCandles();
drawDots();
drawVolume();
drawMacd();
```
